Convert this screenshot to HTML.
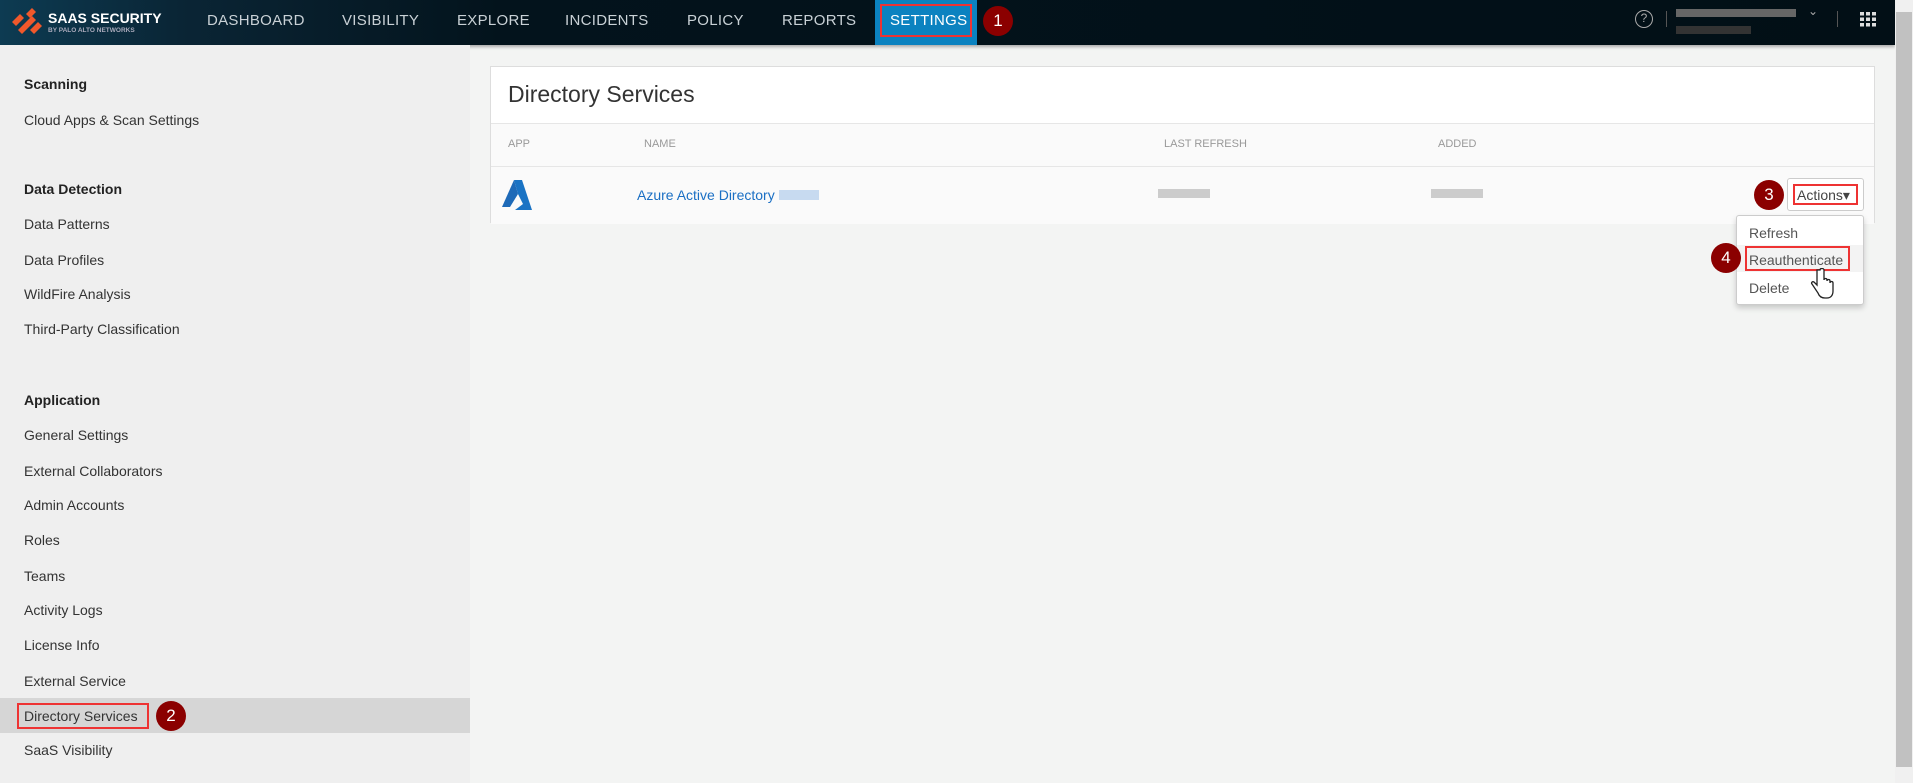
<!DOCTYPE html><html><head><style>
*{margin:0;padding:0;box-sizing:border-box}
body{width:1913px;height:783px;overflow:hidden;background:#f3f4f3;font-family:"Liberation Sans",sans-serif;position:relative}
.nav{position:absolute;left:0;top:0;width:1895px;height:45px;background:linear-gradient(90deg,#0d3b52 0,#0a2535 180px,#03131c 500px,#020f16 100%);box-shadow:0 2px 3px rgba(0,0,0,.3)}
.nav .it{position:absolute;top:12px;color:#c9d1d6;font-size:15px;letter-spacing:.3px}
.badge{position:absolute;width:30px;height:30px;border-radius:50%;background:#8b0000;color:#fff;font-size:17px;text-align:center;line-height:30px}
.side{position:absolute;left:0;top:45px;width:470px;height:738px;background:#efefef}
.side div{position:absolute;left:24px;font-size:14px;color:#333}
.side .h{font-weight:bold;color:#222}
.scroll{position:absolute;left:1895px;top:0;width:18px;height:783px;background:#f0f0f0}
.card{position:absolute;left:490px;top:66px;width:1385px;height:157px;background:#fff;border:1px solid #ddd}
.th{position:absolute;top:138px;font-size:11px;color:#999}
</style></head><body>
<div class="nav">
<svg style="position:absolute;left:12px;top:8px" width="30" height="28" viewBox="0 0 30 28"><g fill="#f0582b"><polygon points="0,14 8,6 12,10 4,18"/><polygon points="6,22 20,8 24,12 10,26"/><polygon points="14,6 20,0 24,4 18,10"/><polygon points="18,22 26,14 30,18 22,26"/></g></svg>
<div style="position:absolute;left:48px;top:10px;color:#fff;font-weight:bold;font-size:14px">SAAS SECURITY</div>
<div style="position:absolute;left:48px;top:27px;color:#aab;font-weight:bold;font-size:6.5px">BY PALO ALTO NETWORKS</div>
<div class="it" style="left:207px">DASHBOARD</div>
<div class="it" style="left:342px">VISIBILITY</div>
<div class="it" style="left:457px">EXPLORE</div>
<div class="it" style="left:565px">INCIDENTS</div>
<div class="it" style="left:687px">POLICY</div>
<div class="it" style="left:782px">REPORTS</div>
<div style="position:absolute;left:875px;top:0;width:102px;height:45px;background:#0b82c0"></div>
<div style="position:absolute;left:880px;top:4px;width:92px;height:33px;border:2px solid #e33"></div>
<div class="it" style="left:890px;color:#fff">SETTINGS</div>
<div class="badge" style="left:983px;top:6px">1</div>
<div style="position:absolute;left:1635px;top:10px;width:18px;height:18px;border:1.5px solid #aaa;border-radius:50%;color:#aaa;font-size:12px;text-align:center;line-height:15px">?</div>
<div style="position:absolute;left:1666px;top:11px;width:1px;height:16px;background:#555"></div>
<div style="position:absolute;left:1676px;top:9px;width:120px;height:8px;background:#666"></div>
<div style="position:absolute;left:1676px;top:26px;width:75px;height:8px;background:#333"></div>
<div style="position:absolute;left:1808px;top:4px;color:#aaa;font-size:12px">&#8964;</div>
<div style="position:absolute;left:1837px;top:11px;width:1px;height:16px;background:#555"></div>
<svg style="position:absolute;left:1860px;top:12px" width="16" height="15"><g fill="#ddd"><rect x="0" y="0" width="4" height="3.5"/><rect x="6" y="0" width="4" height="3.5"/><rect x="12" y="0" width="4" height="3.5"/><rect x="0" y="5.5" width="4" height="3.5"/><rect x="6" y="5.5" width="4" height="3.5"/><rect x="12" y="5.5" width="4" height="3.5"/><rect x="0" y="11" width="4" height="3.5"/><rect x="6" y="11" width="4" height="3.5"/><rect x="12" y="11" width="4" height="3.5"/></g></svg>
</div>
<div class="scroll"><div style="position:absolute;left:1px;top:12px;width:16px;height:755px;background:#c1c1c1"></div></div>
<div class="side">
<div class="h" style="top:31px">Scanning</div>
<div style="top:67px">Cloud Apps &amp; Scan Settings</div>
<div class="h" style="top:136px">Data Detection</div>
<div style="top:171px">Data Patterns</div>
<div style="top:207px">Data Profiles</div>
<div style="top:241px">WildFire Analysis</div>
<div style="top:276px">Third-Party Classification</div>
<div class="h" style="top:347px">Application</div>
<div style="top:382px">General Settings</div>
<div style="top:418px">External Collaborators</div>
<div style="top:452px">Admin Accounts</div>
<div style="top:487px">Roles</div>
<div style="top:523px">Teams</div>
<div style="top:557px">Activity Logs</div>
<div style="top:592px">License Info</div>
<div style="top:628px">External Service</div>
<div style="left:0;top:653px;width:470px;height:35px;background:#d6d6d6"></div>
<div style="left:17px;top:658px;width:132px;height:26px;border:2px solid #e33"></div>
<div style="top:663px">Directory Services</div>
<div style="top:697px">SaaS Visibility</div>
</div>
<div class="badge" style="left:156px;top:701px">2</div>
<div class="card">
<div style="position:absolute;left:17px;top:14px;font-size:23px;color:#333">Directory Services</div>
<div style="position:absolute;left:0;top:56px;width:100%;height:101px;background:#fafafa;border-top:1px solid #e6e6e6"></div>
<div style="position:absolute;left:0;top:99px;width:100%;height:1px;background:#e6e6e6"></div>
</div>
<div class="th" style="left:508px">APP</div>
<div class="th" style="left:644px">NAME</div>
<div class="th" style="left:1164px">LAST REFRESH</div>
<div class="th" style="left:1438px">ADDED</div>
<svg style="position:absolute;left:502px;top:180px" width="30" height="30" viewBox="0 0 30 30"><polygon points="12,0 20,0 30,30 13,30 21,24 16,14" fill="#1a73c4"/><polygon points="12,0 0,27 8,27 16,14" fill="#1e6ab8"/></svg>
<div style="position:absolute;left:637px;top:187px;font-size:14px;color:#1a6fc4">Azure Active Directory <span style="display:inline-block;width:40px;height:10px;background:#c7daf0"></span></div>
<div style="position:absolute;left:1158px;top:189px;width:52px;height:9px;background:#ccc"></div>
<div style="position:absolute;left:1431px;top:189px;width:52px;height:9px;background:#ccc"></div>
<div class="badge" style="left:1754px;top:180px">3</div>
<div style="position:absolute;left:1787px;top:178px;width:77px;height:33px;border:1px solid #ccc;border-radius:3px;background:#fff"></div>
<div style="position:absolute;left:1793px;top:184px;width:65px;height:21px;border:2px solid #e33"></div>
<div style="position:absolute;left:1797px;top:187px;font-size:14px;color:#444">Actions&#9662;</div>
<div style="position:absolute;left:1736px;top:215px;width:128px;height:90px;background:#fff;border:1px solid #ccc;border-radius:3px;box-shadow:0 3px 6px rgba(0,0,0,.18)"></div>
<div style="position:absolute;left:1737px;top:245px;width:126px;height:27px;background:#f3f3f3"></div>
<div style="position:absolute;left:1749px;top:225px;font-size:14px;color:#555">Refresh</div>
<div style="position:absolute;left:1745px;top:246px;width:105px;height:25px;border:2px solid #e33"></div>
<div style="position:absolute;left:1749px;top:252px;font-size:14px;color:#555">Reauthenticate</div>
<div style="position:absolute;left:1749px;top:280px;font-size:14px;color:#555">Delete</div>
<div class="badge" style="left:1711px;top:243px">4</div>
<svg style="position:absolute;left:1810px;top:268px" width="24" height="32" viewBox="0 0 24 32"><path d="M7 2v15l-3-3c-2-1-3 1-2 2l6 9c1 3 3 5 7 5h2c4 0 6-3 6-7v-8c0-2-3-2-3 0v-2c0-2-3-2-3 0v-1c0-2-3-2-3 0V2c0-2-4-2-4 0z" fill="#fff" stroke="#222" stroke-width="1.3"/></svg>
</body></html>
